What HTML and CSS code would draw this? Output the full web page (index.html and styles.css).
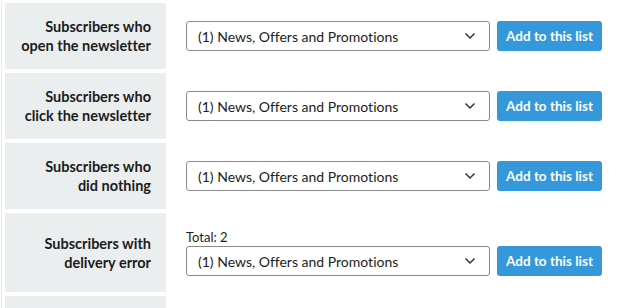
FILE: index.html
```html
<!DOCTYPE html>
<html lang="en">
<head>
  <meta charset="UTF-8" />
  <meta name="viewport" content="width=device-width, initial-scale=1.0">
  <title>Subscriber lists</title>
  <link rel="stylesheet" href="styles.css">
</head>
<body>
  <div class="rows">
    <div class="row">
      <div class="label">Subscribers who<br>open the newsletter</div>
      <div class="field">
        <div class="controls">
          <div class="select">(1) News, Offers and Promotions
            <svg class="chevron" width="12" height="8" viewBox="0 0 12 8"><path d="M1.5 1.5 L6 6 L10.5 1.5" fill="none" stroke="#333" stroke-width="1.5"/></svg>
          </div>
          <button>Add to this list</button>
        </div>
      </div>
    </div>
    <div class="row">
      <div class="label">Subscribers who<br>click the newsletter</div>
      <div class="field">
        <div class="controls">
          <div class="select">(1) News, Offers and Promotions
            <svg class="chevron" width="12" height="8" viewBox="0 0 12 8"><path d="M1.5 1.5 L6 6 L10.5 1.5" fill="none" stroke="#333" stroke-width="1.5"/></svg>
          </div>
          <button>Add to this list</button>
        </div>
      </div>
    </div>
    <div class="row">
      <div class="label">Subscribers who<br>did nothing</div>
      <div class="field">
        <div class="controls">
          <div class="select">(1) News, Offers and Promotions
            <svg class="chevron" width="12" height="8" viewBox="0 0 12 8"><path d="M1.5 1.5 L6 6 L10.5 1.5" fill="none" stroke="#333" stroke-width="1.5"/></svg>
          </div>
          <button>Add to this list</button>
        </div>
      </div>
    </div>
    <div class="row">
      <div class="label">Subscribers with<br>delivery error</div>
      <div class="field">
        <div class="total">Total: 2</div>
        <div class="controls">
          <div class="select">(1) News, Offers and Promotions
            <svg class="chevron" width="12" height="8" viewBox="0 0 12 8"><path d="M1.5 1.5 L6 6 L10.5 1.5" fill="none" stroke="#333" stroke-width="1.5"/></svg>
          </div>
          <button>Add to this list</button>
        </div>
      </div>
    </div>
    <div class="row">
      <div class="label">&nbsp;<br>&nbsp;</div>
      <div class="field"></div>
    </div>
  </div>
</body>
</html>
```

FILE: styles.css
```css
body {
  font-family: Lato, "Open Sans", sans-serif;
  font-variant-ligatures: none;
  background-color: #fff;
  color: #1c1c1c;
  margin: 0;
  padding: 0;
}
.rows {
  display: flex;
  flex-direction: column;
  gap: 4px;
  padding: 3px 0 0 3px;
  margin-left: 1px;
  border-left: 1px solid #e6eaeb;
}
.row {
  display: flex;
  min-height: 66px;
}
.label {
  width: 161px;
  box-sizing: border-box;
  background-color: #eaeeef;
  padding: 14px 15px;
  text-align: right;
  font-weight: bold;
  font-size: 14.5px;
  line-height: 19px;
  display: flex;
  align-items: center;
  justify-content: flex-end;
}
.field {
  display: flex;
  flex-direction: column;
  justify-content: center;
  padding: 16px 0 16px 20px;
}
.total {
  font-size: 13px;
  line-height: 16px;
  margin-bottom: 1px;
}
.controls {
  display: flex;
  gap: 7px;
}
.select {
  width: 304px;
  height: 30px;
  box-sizing: border-box;
  border: 1px solid #8a8a8a;
  border-radius: 3px;
  padding: 0 11px;
  font-size: 14px;
  display: flex;
  align-items: center;
  justify-content: space-between;
}
.chevron {
  margin-right: 2px;
}
button {
  width: 105px;
  height: 30px;
  border: none;
  border-radius: 3px;
  background-color: #3498db;
  color: #fff;
  font-family: inherit;
  font-weight: bold;
  font-size: 13.5px;
  padding: 0;
  cursor: pointer;
}
```
